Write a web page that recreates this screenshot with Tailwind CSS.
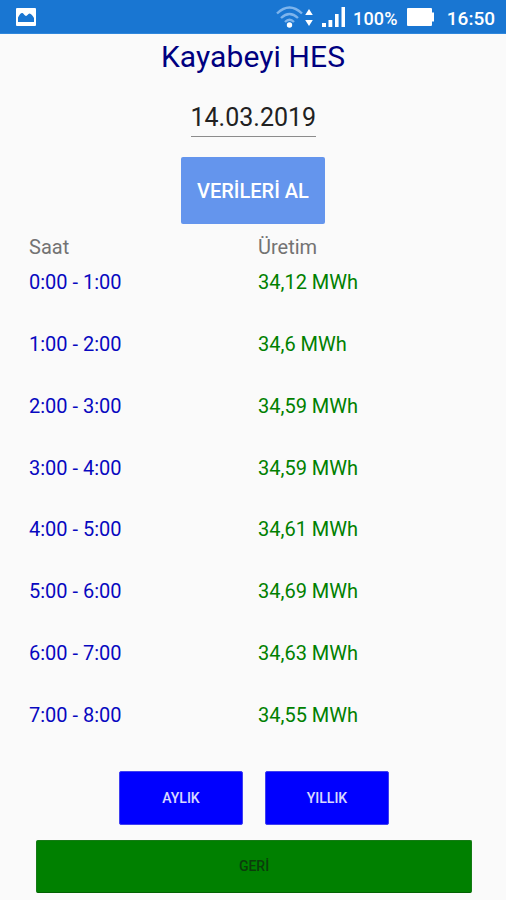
<!DOCTYPE html>
<html lang="tr">
<head>
<meta charset="utf-8">
<title>Kayabeyi HES</title>
<script src="https://cdn.jsdelivr.net/npm/@tailwindcss/browser@4"></script>
</head>
<body class="w-[506px] h-[900px] overflow-hidden bg-[#fafafa] font-[Roboto,sans-serif]">
<div class="flex flex-col h-[900px]">
  <header class="h-[34px] shrink-0 bg-[#1976d2] border-b border-[#2f87dc] flex items-center pl-4 pr-[11px] text-white">
    <svg class="w-5 h-[18px]" viewBox="0 0 20 18"><rect width="20" height="18" rx="1" fill="#fff"/><path d="M2 14V9.5C3.500 6.500 5 4.500 6.500 5c1.500.5 2 3 3.500 3s2-2.500 3.500-2.500S17 8 18 10v4z" fill="#1976d2"/></svg>
    <svg class="ml-[240px] w-[38px] h-6" viewBox="0 0 38 24" fill="none"><g stroke="#7db4ec" stroke-width="2.400"><path d="M1 8.500Q13.500-3.500 26 8.500"/><path d="M5 13Q13.500 5 22 13"/><path d="M9 17Q13.500 12.500 18 17"/></g><circle cx="13.500" cy="20" r="2.700" fill="#fff"/><path d="M33 4l3.800 6h-7.600zM33 21l3.800-6h-7.600z" fill="#fff"/></svg>
    <svg class="ml-2 w-6 h-[22px]" viewBox="0 0 24 22" fill="#fff"><path d="M0 17h4v4H0zM6.500 14h3.800v7H6.500zM13 8h3.600v13H13zM19.500 1h3.500v20h-3.500z"/></svg>
    <span class="ml-[7px] w-[48px] text-[18px] leading-6 font-medium whitespace-nowrap tracking-[0.2px] relative top-[2px]">100%</span>
    <svg class="ml-[6px] w-7 h-[18px]" viewBox="0 0 28 18" fill="#fff"><path d="M1 0h23a1 1 0 0 1 1 1v3.500h2v9h-2V17a1 1 0 0 1-1 1H1a1 1 0 0 1-1-1V1a1 1 0 0 1 1-1z"/></svg>
    <span class="ml-auto text-[19px] leading-6 font-medium relative top-[2px]">16:50</span>
  </header>
  <h1 class="h-[46px] shrink-0 text-center text-[30px] leading-[46px] text-[#000080] tracking-[0.1px]">Kayabeyi HES</h1>
  <div class="mt-[18px] mx-auto w-[125px] h-[39px] shrink-0 border-b border-[#8c8c8c] text-center text-[25px] leading-[39px] text-[#212121] whitespace-nowrap">14.03.2019</div>
  <button class="mt-5 mx-auto w-[144px] h-[67px] shrink-0 rounded-[2px] bg-[#6495ed] text-white text-[20px] font-medium whitespace-nowrap">VERİLERİ AL</button>
  <main class="mt-[11px] pl-[29px] h-[536px] shrink-0 text-[20px] leading-6">
    <div class="grid grid-cols-[229px_1fr] h-[35px] text-[#737373]"><span>Saat</span><span>Üretim</span></div>
    <div class="grid grid-cols-[229px_1fr] auto-rows-[61.86px] text-[#008000]">
      <span class="text-[#0808c0]">0:00 - 1:00</span><span>34,12 MWh</span>
      <span class="text-[#0808c0]">1:00 - 2:00</span><span>34,6 MWh</span>
      <span class="text-[#0808c0]">2:00 - 3:00</span><span>34,59 MWh</span>
      <span class="text-[#0808c0]">3:00 - 4:00</span><span>34,59 MWh</span>
      <span class="text-[#0808c0]">4:00 - 5:00</span><span>34,61 MWh</span>
      <span class="text-[#0808c0]">5:00 - 6:00</span><span>34,69 MWh</span>
      <span class="text-[#0808c0]">6:00 - 7:00</span><span>34,63 MWh</span>
      <span class="text-[#0808c0]">7:00 - 8:00</span><span>34,55 MWh</span>
    </div>
  </main>
  <div class="flex gap-[22px] pl-[119px] h-[54px] shrink-0 text-white/85 text-[14px] font-medium">
    <button class="w-[124px] rounded-[2px] bg-[#0000ff] border border-[#4040f0]">AYLIK</button>
    <button class="w-[124px] rounded-[2px] bg-[#0000ff] border border-[#4040f0]">YILLIK</button>
  </div>
  <button class="mt-[15px] ml-9 w-[436px] h-[53px] shrink-0 rounded-[2px] bg-[#008000] border border-[#157a15] border-b-[#006000] text-[#0b3d0b] text-[14px] font-medium">GERİ</button>
</div>
</body>
</html>
